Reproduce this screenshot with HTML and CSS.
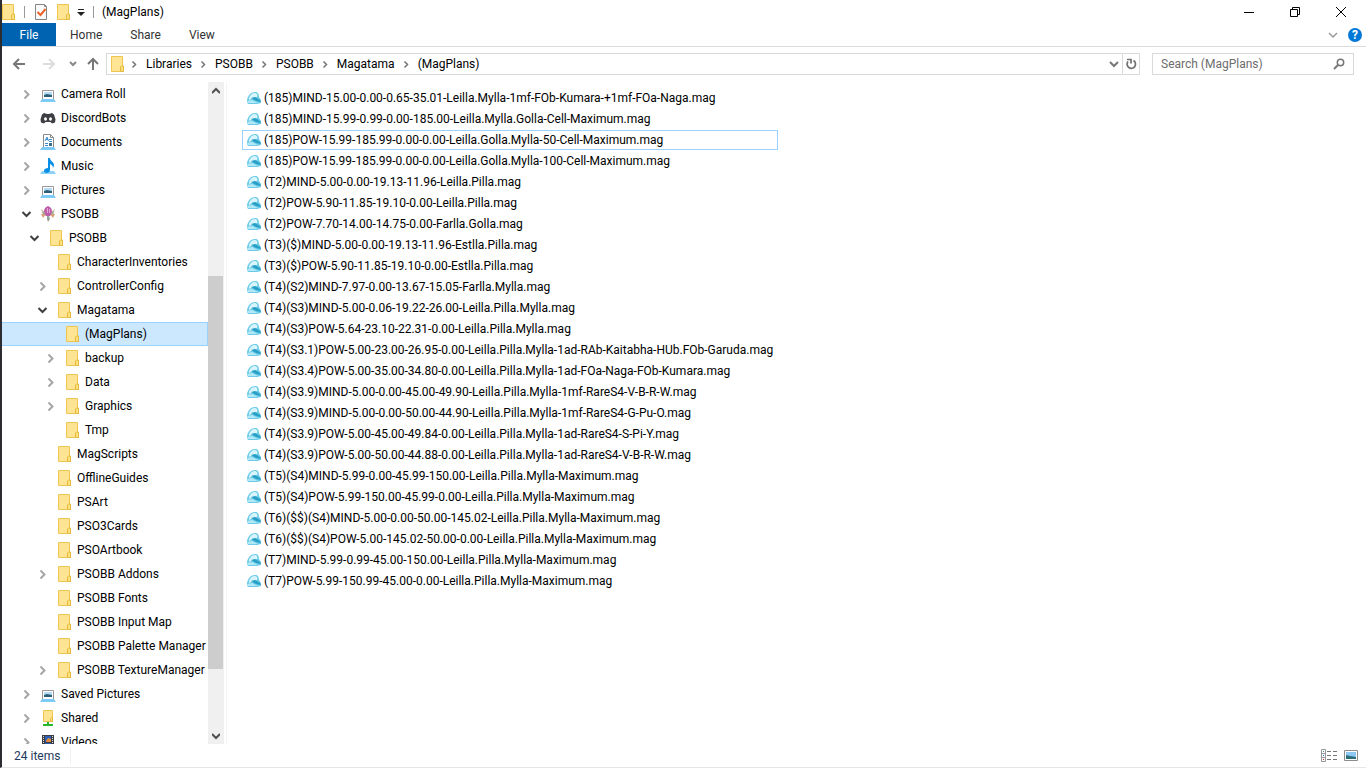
FILE: index.html
```html
<!DOCTYPE html>
<html lang="en">
<head>
  <meta charset="UTF-8" />
  <meta name="viewport" content="width=device-width, initial-scale=1.0" />
  <title>(MagPlans)</title>
  <link rel="stylesheet" href="styles.css">
</head>
<body>
  <!-- icon set -->
  <svg class="sprite" aria-hidden="true">
    <symbol id="folder" viewBox="0 0 16 16">
      <path d="M2.500 .5h11v10l1 0v5h-12z" fill="#ffe494" stroke="#ecc650" />
      <path d="M11.500 15.500v-4.500l1-1h2v5.500z" fill="#ffe07f" stroke="#e3b93e" />
    </symbol>
    <symbol id="right" viewBox="0 0 16 16">
      <path d="M6.500 4.500l4 4-4 4" fill="none" stroke="#a6a6a6" stroke-width="2" />
    </symbol>
    <symbol id="down" viewBox="0 0 16 16">
      <path d="M4.500 6l4 4 4-4" fill="none" stroke="#404040" stroke-width="2" />
    </symbol>
    <symbol id="crumb" viewBox="0 0 10 10">
      <path d="M3.500 2.500l3 3-3 3" fill="none" stroke="#777" stroke-width="1.500" />
    </symbol>
    <symbol id="picture" viewBox="0 0 16 16">
      <path d="M2.500 4.500h11v9h-11z" fill="#fff" stroke="#999" />
      <path d="M4 6h8v5H4z" fill="#b5dcf5" />
      <path d="M4 9l3-1 5 1v2H4z" fill="#2b5e77" />
      <path d="M2 13h12l2 3H0z" fill="#7ccaf5" />
    </symbol>
    <symbol id="discord" viewBox="0 0 16 16">
      <path d="M4 3l3 1h2l3-1 2 1.500 1.500 5-.5 3-3 1-1.500-1.500h-5L4 13.500l-3-1-.5-3L2 4.500z" fill="#3d3f45" />
      <ellipse cx="5.500" cy="9" rx="1.500" ry="1.700" fill="#fff" />
      <ellipse cx="10.500" cy="9" rx="1.500" ry="1.700" fill="#fff" />
    </symbol>
    <symbol id="document" viewBox="0 0 16 16">
      <path d="M3.500 .5h7l3 3v10h-10z" fill="#fff" stroke="#8a8a8a" />
      <path d="M10.500 .5v3h3" fill="none" stroke="#8a8a8a" />
      <path d="M5 7l2-4 1.500 4M6 5.500h2M9 5.500h3M9 7.500h3M5 9.500h3M5 11.500h3" fill="none" stroke="#3a8ccc" />
      <path d="M9 9h3v3H9z" fill="#3b7187" />
      <path d="M2 13h12l2 3H0z" fill="#7ccaf5" />
    </symbol>
    <symbol id="music" viewBox="0 0 16 16">
      <path d="M2 13h12l2 3H0z" fill="#8ed1f7" />
      <path d="M8 0h2c0 3 4 4 4 7 0 1-.5 2-1 3 0-2-1-3-3-4v6c0 2-2 3-3.500 3S4 14 4 12.500 6 10 8 10z" fill="#0a8fe6" />
    </symbol>
    <symbol id="mag" viewBox="0 0 16 16">
      <path d="M1 3l4 3 2 4-4-1zM15 3l-4 3-2 4 4-1z" fill="#c9b8a0" />
      <path d="M1 8l5 0-3 4zM15 8l-5 0 3 4z" fill="#dd9d78" />
      <path d="M2 6l3 1-1 2zM14 6l-3 1 1 2z" fill="#8fae85" />
      <path d="M8 0c3 1 4 3 4 6l-2 4H6L4 6c0-3 1-5 4-6z" fill="#bd5eaa" />
      <path d="M7 2h1v5H7zM9 3h1v4H9z" fill="#e7a4d7" />
      <path d="M7 10h2l1 3-2 3-1-3z" fill="#98a09b" />
    </symbol>
    <symbol id="shared" viewBox="0 0 16 16">
      <path d="M3.500 .5h9v7l0 0v4h-9z" fill="#ffe494" stroke="#ecc650" />
      <path d="M10.500 11.500v-3l1-1h1v4z" fill="#ffe07f" stroke="#e3b93e" />
      <path d="M7 12h2v2h4v2H3v-2h4z" fill="#2db52d" />
    </symbol>
    <symbol id="video" viewBox="0 0 16 16">
      <path d="M2 1h12v15H2z" fill="#3c3c44" />
      <path d="M5 2h6v6H5z" fill="#2d60b8" />
      <path d="M6 7l2-3 3 1v3H6z" fill="#e18a3b" />
      <path d="M5 9h6v6H5z" fill="#2d60b8" />
      <path d="M3.500 2v14M12.500 2v14" stroke="#ddd" stroke-dasharray="1 1" />
    </symbol>
    <symbol id="cap" viewBox="0 0 16 16">
      <path d="M1 10c1-5 4-8 8-8 3 0 4 2 4 5l2 3v3l-4 1H2l-1-2z" fill="#6bcbe8" />
      <path d="M3 8c1-3 3-5 6-5 2 0 3 2 2 4L7 8l-4 2z" fill="#d9f5fc" />
      <path d="M5 8l4-1 5 3 1 2-5-1z" fill="#2a9fc6" />
      <path d="M1 11l5-1 6 3H2z" fill="#b3e8f6" />
    </symbol>
  </svg>

  <div class="window">
    <header class="titlebar">
      <svg class="icon app"><use href="#folder" /></svg>
      <span class="divider"></span>
      <button class="quick" aria-label="Properties">
        <svg class="icon" viewBox="0 0 16 16">
          <path d="M2.500 .5h9l2 2v13h-11z" fill="#f7f9fb" stroke="#858585" />
          <path d="M11.500 .5v2h2" fill="none" stroke="#858585" />
          <path d="M4.500 8l3 3 5-6" fill="none" stroke="#ed6327" stroke-width="2" />
        </svg>
      </button>
      <button class="quick" aria-label="New folder"><svg class="icon"><use href="#folder" /></svg></button>
      <button aria-label="Customize toolbar">
        <svg width="8" height="8" viewBox="0 0 8 8"><path d="M1 1h6v1H1zM0 4h8L4 8z" fill="#222" /></svg>
      </button>
      <span class="divider"></span>
      <h1>(MagPlans)</h1>
      <div class="controls">
        <button aria-label="Minimize"><svg viewBox="0 0 12 12"><path d="M1 6.500h10" /></svg></button>
        <button aria-label="Restore"><svg viewBox="0 0 12 12"><path d="M1.500 3.500h7v7h-7zM3.500 3V1.500h7v7H9" /></svg></button>
        <button aria-label="Close"><svg viewBox="0 0 12 12"><path d="M1 1l10 10M11 1L1 11" /></svg></button>
      </div>
    </header>

    <nav class="ribbon">
      <button class="file">File</button>
      <button>Home</button>
      <button>Share</button>
      <button>View</button>
      <div class="help">
        <button aria-label="Expand ribbon"><svg width="10" height="8" viewBox="0 0 10 8"><path d="M1 2l4 4 4-4" fill="none" stroke="#999" stroke-width="1.500" /></svg></button>
        <button class="question" aria-label="Help">?</button>
      </div>
    </nav>

    <div class="toolbar">
      <button aria-label="Back"><svg class="icon" viewBox="0 0 16 16"><path d="M14 8H3M8 3L3 8l5 5" fill="none" stroke="#777" stroke-width="2" /></svg></button>
      <button class="forward" aria-label="Forward"><svg class="icon" viewBox="0 0 16 16"><path d="M2 8h11M8 3l5 5-5 5" fill="none" stroke="#ddd" stroke-width="2" /></svg></button>
      <button class="recent" aria-label="Recent locations"><svg width="8" height="8" viewBox="0 0 8 8"><path d="M1 2l3 3 3-3" fill="none" stroke="#888" stroke-width="2" /></svg></button>
      <button aria-label="Up"><svg class="icon" viewBox="0 0 16 16"><path d="M8 14V3M3 8l5-5 5 5" fill="none" stroke="#777" stroke-width="2" /></svg></button>
      <div class="address">
        <svg class="icon"><use href="#folder" /></svg>
        <svg class="sep"><use href="#crumb" /></svg>
        <a href="#">Libraries</a>
        <svg class="sep"><use href="#crumb" /></svg>
        <a href="#">PSOBB</a>
        <svg class="sep"><use href="#crumb" /></svg>
        <a href="#">PSOBB</a>
        <svg class="sep"><use href="#crumb" /></svg>
        <a href="#">Magatama</a>
        <svg class="sep"><use href="#crumb" /></svg>
        <a href="#">(MagPlans)</a>
        <button class="history" aria-label="Previous locations"><svg width="10" height="8" viewBox="0 0 10 8"><path d="M1 2l4 4 4-4" fill="none" stroke="#777" stroke-width="2" /></svg></button>
        <button class="refresh" aria-label="Refresh"><svg width="12" height="12" viewBox="0 0 12 12"><path d="M2 1.500h4v4M3 3.500a4.200 4.200 0 1 0 5.500-1" fill="none" stroke="#707070" stroke-width="1.700" /></svg></button>
      </div>
      <div class="search">
        <input type="text" placeholder="Search (MagPlans)" aria-label="Search (MagPlans)">
        <button aria-label="Search"><svg width="12" height="12" viewBox="0 0 12 12"><circle cx="7.500" cy="4.500" r="3.200" fill="none" stroke="#777" stroke-width="1.500" /><path d="M5 7l-4 4" stroke="#777" stroke-width="2" /></svg></button>
      </div>
    </div>

    <main class="content">
      <aside class="sidebar">
        <ul class="tree">
          <li><button aria-label="Expand"><svg class="icon"><use href="#right" /></svg></button><a href="#"><svg class="icon"><use href="#picture" /></svg>Camera Roll</a></li>
          <li><button aria-label="Expand"><svg class="icon"><use href="#right" /></svg></button><a href="#"><svg class="icon"><use href="#discord" /></svg>DiscordBots</a></li>
          <li><button aria-label="Expand"><svg class="icon"><use href="#right" /></svg></button><a href="#"><svg class="icon"><use href="#document" /></svg>Documents</a></li>
          <li><button aria-label="Expand"><svg class="icon"><use href="#right" /></svg></button><a href="#"><svg class="icon"><use href="#music" /></svg>Music</a></li>
          <li><button aria-label="Expand"><svg class="icon"><use href="#right" /></svg></button><a href="#"><svg class="icon"><use href="#picture" /></svg>Pictures</a></li>
          <li><button aria-label="Collapse"><svg class="icon"><use href="#down" /></svg></button><a href="#"><svg class="icon"><use href="#mag" /></svg>PSOBB</a></li>
          <li class="level-2"><button aria-label="Collapse"><svg class="icon"><use href="#down" /></svg></button><a href="#"><svg class="icon"><use href="#folder" /></svg>PSOBB</a></li>
          <li class="level-3 leaf"><a href="#"><svg class="icon"><use href="#folder" /></svg>CharacterInventories</a></li>
          <li class="level-3"><button aria-label="Expand"><svg class="icon"><use href="#right" /></svg></button><a href="#"><svg class="icon"><use href="#folder" /></svg>ControllerConfig</a></li>
          <li class="level-3"><button aria-label="Collapse"><svg class="icon"><use href="#down" /></svg></button><a href="#"><svg class="icon"><use href="#folder" /></svg>Magatama</a></li>
          <li class="level-4 leaf selected"><a href="#"><svg class="icon"><use href="#folder" /></svg>(MagPlans)</a></li>
          <li class="level-4"><button aria-label="Expand"><svg class="icon"><use href="#right" /></svg></button><a href="#"><svg class="icon"><use href="#folder" /></svg>backup</a></li>
          <li class="level-4"><button aria-label="Expand"><svg class="icon"><use href="#right" /></svg></button><a href="#"><svg class="icon"><use href="#folder" /></svg>Data</a></li>
          <li class="level-4"><button aria-label="Expand"><svg class="icon"><use href="#right" /></svg></button><a href="#"><svg class="icon"><use href="#folder" /></svg>Graphics</a></li>
          <li class="level-4 leaf"><a href="#"><svg class="icon"><use href="#folder" /></svg>Tmp</a></li>
          <li class="level-3 leaf"><a href="#"><svg class="icon"><use href="#folder" /></svg>MagScripts</a></li>
          <li class="level-3 leaf"><a href="#"><svg class="icon"><use href="#folder" /></svg>OfflineGuides</a></li>
          <li class="level-3 leaf"><a href="#"><svg class="icon"><use href="#folder" /></svg>PSArt</a></li>
          <li class="level-3 leaf"><a href="#"><svg class="icon"><use href="#folder" /></svg>PSO3Cards</a></li>
          <li class="level-3 leaf"><a href="#"><svg class="icon"><use href="#folder" /></svg>PSOArtbook</a></li>
          <li class="level-3"><button aria-label="Expand"><svg class="icon"><use href="#right" /></svg></button><a href="#"><svg class="icon"><use href="#folder" /></svg>PSOBB Addons</a></li>
          <li class="level-3 leaf"><a href="#"><svg class="icon"><use href="#folder" /></svg>PSOBB Fonts</a></li>
          <li class="level-3 leaf"><a href="#"><svg class="icon"><use href="#folder" /></svg>PSOBB Input Map</a></li>
          <li class="level-3 leaf"><a href="#"><svg class="icon"><use href="#folder" /></svg>PSOBB Palette Manager</a></li>
          <li class="level-3"><button aria-label="Expand"><svg class="icon"><use href="#right" /></svg></button><a href="#"><svg class="icon"><use href="#folder" /></svg>PSOBB TextureManager</a></li>
          <li><button aria-label="Expand"><svg class="icon"><use href="#right" /></svg></button><a href="#"><svg class="icon"><use href="#picture" /></svg>Saved Pictures</a></li>
          <li><button aria-label="Expand"><svg class="icon"><use href="#right" /></svg></button><a href="#"><svg class="icon"><use href="#shared" /></svg>Shared</a></li>
          <li><button aria-label="Expand"><svg class="icon"><use href="#right" /></svg></button><a href="#"><svg class="icon"><use href="#video" /></svg>Videos</a></li>
        </ul>
        <div class="scrollbar">
          <button aria-label="Scroll up"><svg width="8" height="8" viewBox="0 0 8 8"><path d="M0 6l4-4 4 4" fill="none" stroke="#505050" stroke-width="2" /></svg></button>
          <div class="track"><div class="thumb"></div></div>
          <button aria-label="Scroll down"><svg width="8" height="8" viewBox="0 0 8 8"><path d="M0 2l4 4 4-4" fill="none" stroke="#505050" stroke-width="2" /></svg></button>
        </div>
      </aside>

      <ul class="files">
        <li><a href="#"><svg class="icon"><use href="#cap" /></svg>(185)MIND-15.00-0.00-0.65-35.01-Leilla.Mylla-1mf-FOb-Kumara-+1mf-FOa-Naga.mag</a></li>
        <li><a href="#"><svg class="icon"><use href="#cap" /></svg>(185)MIND-15.99-0.99-0.00-185.00-Leilla.Mylla.Golla-Cell-Maximum.mag</a></li>
        <li class="focused"><a href="#"><svg class="icon"><use href="#cap" /></svg>(185)POW-15.99-185.99-0.00-0.00-Leilla.Golla.Mylla-50-Cell-Maximum.mag</a></li>
        <li><a href="#"><svg class="icon"><use href="#cap" /></svg>(185)POW-15.99-185.99-0.00-0.00-Leilla.Golla.Mylla-100-Cell-Maximum.mag</a></li>
        <li><a href="#"><svg class="icon"><use href="#cap" /></svg>(T2)MIND-5.00-0.00-19.13-11.96-Leilla.Pilla.mag</a></li>
        <li><a href="#"><svg class="icon"><use href="#cap" /></svg>(T2)POW-5.90-11.85-19.10-0.00-Leilla.Pilla.mag</a></li>
        <li><a href="#"><svg class="icon"><use href="#cap" /></svg>(T2)POW-7.70-14.00-14.75-0.00-Farlla.Golla.mag</a></li>
        <li><a href="#"><svg class="icon"><use href="#cap" /></svg>(T3)($)MIND-5.00-0.00-19.13-11.96-Estlla.Pilla.mag</a></li>
        <li><a href="#"><svg class="icon"><use href="#cap" /></svg>(T3)($)POW-5.90-11.85-19.10-0.00-Estlla.Pilla.mag</a></li>
        <li><a href="#"><svg class="icon"><use href="#cap" /></svg>(T4)(S2)MIND-7.97-0.00-13.67-15.05-Farlla.Mylla.mag</a></li>
        <li><a href="#"><svg class="icon"><use href="#cap" /></svg>(T4)(S3)MIND-5.00-0.06-19.22-26.00-Leilla.Pilla.Mylla.mag</a></li>
        <li><a href="#"><svg class="icon"><use href="#cap" /></svg>(T4)(S3)POW-5.64-23.10-22.31-0.00-Leilla.Pilla.Mylla.mag</a></li>
        <li><a href="#"><svg class="icon"><use href="#cap" /></svg>(T4)(S3.1)POW-5.00-23.00-26.95-0.00-Leilla.Pilla.Mylla-1ad-RAb-Kaitabha-HUb.FOb-Garuda.mag</a></li>
        <li><a href="#"><svg class="icon"><use href="#cap" /></svg>(T4)(S3.4)POW-5.00-35.00-34.80-0.00-Leilla.Pilla.Mylla-1ad-FOa-Naga-FOb-Kumara.mag</a></li>
        <li><a href="#"><svg class="icon"><use href="#cap" /></svg>(T4)(S3.9)MIND-5.00-0.00-45.00-49.90-Leilla.Pilla.Mylla-1mf-RareS4-V-B-R-W.mag</a></li>
        <li><a href="#"><svg class="icon"><use href="#cap" /></svg>(T4)(S3.9)MIND-5.00-0.00-50.00-44.90-Leilla.Pilla.Mylla-1mf-RareS4-G-Pu-O.mag</a></li>
        <li><a href="#"><svg class="icon"><use href="#cap" /></svg>(T4)(S3.9)POW-5.00-45.00-49.84-0.00-Leilla.Pilla.Mylla-1ad-RareS4-S-Pi-Y.mag</a></li>
        <li><a href="#"><svg class="icon"><use href="#cap" /></svg>(T4)(S3.9)POW-5.00-50.00-44.88-0.00-Leilla.Pilla.Mylla-1ad-RareS4-V-B-R-W.mag</a></li>
        <li><a href="#"><svg class="icon"><use href="#cap" /></svg>(T5)(S4)MIND-5.99-0.00-45.99-150.00-Leilla.Pilla.Mylla-Maximum.mag</a></li>
        <li><a href="#"><svg class="icon"><use href="#cap" /></svg>(T5)(S4)POW-5.99-150.00-45.99-0.00-Leilla.Pilla.Mylla-Maximum.mag</a></li>
        <li><a href="#"><svg class="icon"><use href="#cap" /></svg>(T6)($$)(S4)MIND-5.00-0.00-50.00-145.02-Leilla.Pilla.Mylla-Maximum.mag</a></li>
        <li><a href="#"><svg class="icon"><use href="#cap" /></svg>(T6)($$)(S4)POW-5.00-145.02-50.00-0.00-Leilla.Pilla.Mylla-Maximum.mag</a></li>
        <li><a href="#"><svg class="icon"><use href="#cap" /></svg>(T7)MIND-5.99-0.99-45.00-150.00-Leilla.Pilla.Mylla-Maximum.mag</a></li>
        <li><a href="#"><svg class="icon"><use href="#cap" /></svg>(T7)POW-5.99-150.99-45.00-0.00-Leilla.Pilla.Mylla-Maximum.mag</a></li>
      </ul>
    </main>

    <footer class="statusbar">
      <span>24 items</span>
      <div class="views">
        <button aria-label="Details view">
          <svg width="16" height="14" viewBox="0 0 16 14">
            <path d="M.5 .5h4v12h-4zM.5 4.500h4M.5 8.500h4" fill="#fff" stroke="#999" />
            <path d="M6 2.500h4M12 2.500h4M6 6.500h4M12 6.500h4M6 10.500h4M12 10.500h4" stroke="#777" />
            <path d="M2 2h1v1H2z" fill="#369b62" /><path d="M2 6h1v1H2z" fill="#3778d0" /><path d="M2 10h1v1H2z" fill="#cf2035" />
          </svg>
        </button>
        <button aria-label="Large icons view">
          <svg width="14" height="12" viewBox="0 0 14 12">
            <path d="M.5 .5h13v10H.5z" fill="#fff" stroke="#8c8c8c" />
            <path d="M2 2h10v7H2z" fill="#8dc7f4" /><path d="M2 5l4 1 6 1v2H2z" fill="#2d6c79" />
          </svg>
        </button>
      </div>
    </footer>
  </div>
</body>
</html>
```

FILE: styles.css
```css
* {
  box-sizing: border-box;
}

body {
  margin: 0;
  font-family: Roboto, "Open Sans", sans-serif;
  font-size: 12px;
  line-height: 16px;
  color: #000;
  background: #fff;
}

button {
  display: flex;
  align-items: center;
  justify-content: center;
  padding: 0;
  border: none;
  background: none;
  font: inherit;
  color: inherit;
}

a {
  color: inherit;
  text-decoration: none;
}

ul {
  margin: 0;
  padding: 0;
  list-style: none;
}

svg {
  flex: none;
}

.sprite {
  display: none;
}

.icon {
  width: 16px;
  height: 16px;
}

.window {
  display: flex;
  flex-direction: column;
  height: 100vh;
  border-left: 2px solid #2b2d30;
  border-bottom: 1px solid #e6e6e6;
}

/* title bar */
.titlebar {
  display: flex;
  flex: none;
  align-items: center;
  height: 23px;
}

.app {
  margin-left: -2px;
}

.divider {
  width: 1px;
  height: 12px;
  margin: 0 8px;
  background: #999;
}

.quick {
  margin-right: 6px;
}

.titlebar h1 {
  margin: 0;
  font-size: 12px;
  font-weight: normal;
}

.controls {
  display: flex;
  margin-left: auto;
  padding-right: 2px;
}

.controls button {
  width: 46px;
  height: 20px;
}

.controls svg {
  width: 12px;
  height: 12px;
  fill: none;
  stroke: #000;
}

/* ribbon tabs */
.ribbon {
  display: flex;
  flex: none;
  height: 24px;
  border-bottom: 1px solid #dadbdc;
  color: #333;
}

.ribbon > button {
  padding: 0 14px;
}

.ribbon .file {
  width: 54px;
  background: #0063b1;
  color: #fff;
}

.help {
  display: flex;
  gap: 10px;
  align-items: center;
  margin-left: auto;
  padding-right: 4px;
}

.question {
  width: 14px;
  height: 14px;
  border-radius: 50%;
  background: #0078d7;
  color: #fff;
  font-weight: bold;
}

/* address bar */
.toolbar {
  display: flex;
  flex: none;
  align-items: center;
  height: 35px;
  padding: 0 12px 1px 9px;
}

.forward {
  margin-left: 14px;
}

.recent {
  margin: 0 8px 0 12px;
}

.address {
  display: flex;
  flex: 1;
  align-items: center;
  height: 22px;
  margin: 0 12px 0 5px;
  padding-left: 2px;
  border: 1px solid #d9d9d9;
}

.sep {
  width: 10px;
  height: 10px;
  margin: 0 7px 0 6px;
}

.icon + .sep {
  margin-left: 4px;
}

.history {
  width: 16px;
  margin-left: auto;
}

.refresh {
  align-self: stretch;
  width: 17px;
  border-left: 1px solid #d9d9d9;
}

.search {
  display: flex;
  align-items: center;
  width: 202px;
  height: 22px;
  padding: 0 8px;
  border: 1px solid #d9d9d9;
}

.search input {
  flex: 1;
  min-width: 0;
  padding: 0;
  border: none;
  outline: none;
  font: inherit;
}

.search input::placeholder {
  color: #6d6d6d;
}

/* folder tree */
.content {
  display: flex;
  flex: 1;
  min-height: 0;
}

.sidebar {
  display: flex;
  flex: none;
  width: 225px;
  padding-right: 2px;
  border-right: 1px solid #f5f5f5;
}

.tree {
  flex: 1;
  min-width: 0;
  overflow: hidden;
}

.tree li {
  display: flex;
  align-items: center;
  height: 24px;
  padding-left: 16px;
  border: 1px solid transparent;
  border-left: none;
  white-space: nowrap;
}

.tree a {
  display: flex;
  gap: 5px;
  align-items: center;
  padding-left: 6px;
}

.tree .level-2 {
  padding-left: 24px;
}

.tree .level-3 {
  padding-left: 32px;
}

.tree .level-4 {
  padding-left: 40px;
}

.tree .leaf a {
  padding-left: 22px;
}

.tree .selected {
  background: #cce8ff;
  border-color: #99d1ff;
}

.scrollbar {
  display: flex;
  flex-direction: column;
  width: 16px;
  background: #f0f0f0;
}

.scrollbar button {
  height: 17px;
}

.track {
  display: flex;
  flex: 1;
  flex-direction: column;
  justify-content: flex-end;
  padding-bottom: 58px;
}

.thumb {
  width: 15px;
  height: 69%;
  background: #cdcdcd;
}

/* file list */
.files {
  display: flex;
  flex: 1;
  flex-direction: column;
  gap: 1px;
  align-items: flex-start;
  min-width: 0;
  padding: 6px 15px;
  overflow: hidden;
}

.files li {
  flex: none;
  width: 536px;
  height: 20px;
  padding: 1px 3px;
  border: 1px solid transparent;
  white-space: nowrap;
}

.files a {
  display: flex;
  gap: 2px;
  align-items: center;
}

.files .focused {
  border-color: #99d1ff;
}

/* status bar */
.statusbar {
  display: flex;
  flex: none;
  align-items: center;
  justify-content: space-between;
  height: 23px;
  padding: 0 8px 0 12px;
  color: #1e395b;
}

.statusbar span {
  padding-right: 10px;
  border-right: 1px solid #f0f0f0;
}

.views {
  display: flex;
  gap: 7px;
}
```
